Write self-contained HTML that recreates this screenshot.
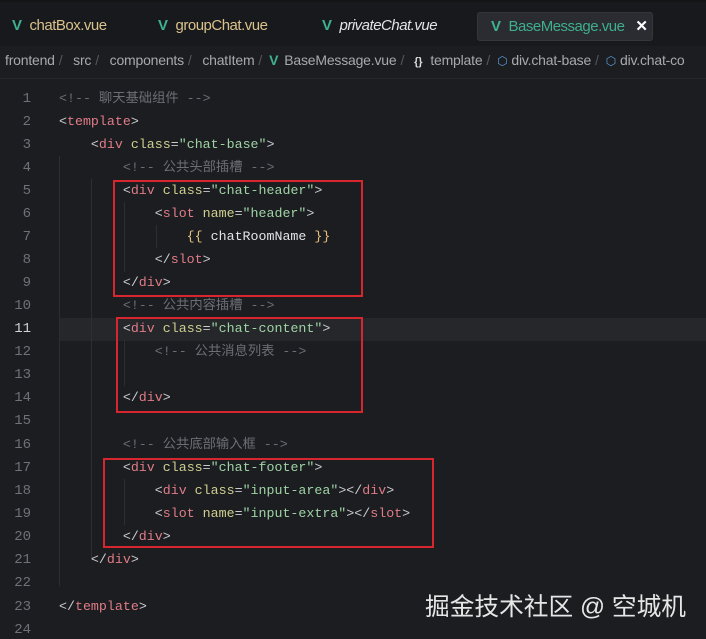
<!DOCTYPE html>
<html><head><meta charset="utf-8"><style>
*{margin:0;padding:0;box-sizing:border-box}
body{width:706px;height:637px;background:#1c1d21;overflow:hidden;position:relative;font-family:"Liberation Sans","Noto Sans CJK SC",sans-serif}
.tabs{position:absolute;left:0;top:0;width:706px;height:46px;background:#18191c;border-top:2px solid #141517}
.tab{position:absolute;top:15px;font-size:15px;letter-spacing:-0.5px;white-space:nowrap}
.v{color:#3fb28d;font-weight:bold;margin-right:8px}
.active{position:absolute;left:477px;top:10px;width:176px;height:29px;background:#2a2c31;border-radius:3px;border:1px solid #34363b}
.bc{position:absolute;left:0;top:46px;width:706px;height:33px;border-bottom:1px solid #26272b;font-size:14px;color:#a7a9ad;white-space:nowrap;padding:6px 0 0 5px;letter-spacing:-0.2px}
.bc .s{color:#55585e;margin:0 7px 0 4px}
.cube{color:#5a9bd5;font-size:12px;margin-right:4px}
.ln{position:absolute;width:31px;text-align:right;font-family:"Liberation Mono",monospace;font-size:14px;line-height:18px;color:#6e7178}
.code{position:absolute;left:59px;font-family:"Liberation Mono","Noto Sans CJK SC",monospace;font-size:13.3px;line-height:18px;height:18px;white-space:pre;color:#c9cbcf}
.t{color:#e07c87}.a{color:#cfcf8e}.s2{color:#9fd3a4}.c{color:#6b6e75}.y{color:#e5c07b}.w{color:#e3e4e6}
.box{position:absolute;border:2px solid #d8262e}
.guide{position:absolute;width:1px;background:#2c2e33}
.wm{position:absolute;left:425px;top:587px;font-size:24.7px;color:#e6e6e6;font-family:"Liberation Sans","Noto Sans CJK SC",sans-serif;white-space:nowrap}
</style></head><body>
<div class="tabs">
<div class="active"></div>
<div class="tab" style="left:12px;color:#d9c28c"><span class="v">V</span>chatBox.vue</div>
<div class="tab" style="left:158px;color:#d9c28c"><span class="v">V</span>groupChat.vue</div>
<div class="tab" style="left:322px;color:#e3e4e6;font-style:italic"><span class="v" style="font-style:normal">V</span>privateChat.vue</div>
<div class="tab" style="left:491px;color:#3fae8a"><span class="v">V</span>BaseMessage.vue<span style="color:#fff;font-weight:bold;margin-left:11px">✕</span></div>
</div>
<div class="bc">frontend<span class="s">/</span> src<span class="s">/</span> components<span class="s">/</span> chatItem<span class="s">/</span><span class="v" style="margin-right:6px">V</span>BaseMessage.vue<span class="s">/</span><span style="color:#ddd;font-size:11px;font-weight:bold;margin:0 8px 0 3px">{}</span>template<span class="s">/</span><span class="cube">⬡</span>div.chat-base<span class="s">/</span><span class="cube">⬡</span>div.chat-co</div>
<div style="position:absolute;left:59px;top:318px;width:647px;height:23px;background:#25272b"></div>
<div class="guide" style="left:59px;top:156px;height:430px"></div>
<div class="guide" style="left:91px;top:179px;height:380px"></div>
<div class="guide" style="left:124px;top:202px;height:70px"></div>
<div class="guide" style="left:156px;top:225px;height:23px"></div>
<div class="guide" style="left:124px;top:340px;height:46px"></div>
<div class="guide" style="left:124px;top:479px;height:46px"></div>
<div class="box" style="left:113px;top:180px;width:250px;height:117px"></div>
<div class="box" style="left:116px;top:317px;width:247px;height:96px"></div>
<div class="box" style="left:103px;top:458px;width:331px;height:90px"></div>
<div class="wm">掘金技术社区 @ 空城机</div>
<div class="ln" style="top:90px">1</div><div class="code" style="top:90px"><span class="c">&lt;!-- 聊天基础组件 --&gt;</span></div>
<div class="ln" style="top:113px">2</div><div class="code" style="top:113px">&lt;<span class="t">template</span>&gt;</div>
<div class="ln" style="top:136px">3</div><div class="code" style="top:136px">    &lt;<span class="t">div</span> <span class="a">class</span>=<span class="s2">"chat-base"</span>&gt;</div>
<div class="ln" style="top:159px">4</div><div class="code" style="top:159px">        <span class="c">&lt;!-- 公共头部插槽 --&gt;</span></div>
<div class="ln" style="top:182px">5</div><div class="code" style="top:182px">        &lt;<span class="t">div</span> <span class="a">class</span>=<span class="s2">"chat-header"</span>&gt;</div>
<div class="ln" style="top:205px">6</div><div class="code" style="top:205px">            &lt;<span class="t">slot</span> <span class="a">name</span>=<span class="s2">"header"</span>&gt;</div>
<div class="ln" style="top:228px">7</div><div class="code" style="top:228px">                <span class="y">{{</span> <span class="w">chatRoomName</span> <span class="y">}}</span></div>
<div class="ln" style="top:251px">8</div><div class="code" style="top:251px">            &lt;/<span class="t">slot</span>&gt;</div>
<div class="ln" style="top:274px">9</div><div class="code" style="top:274px">        &lt;/<span class="t">div</span>&gt;</div>
<div class="ln" style="top:297px">10</div><div class="code" style="top:297px">        <span class="c">&lt;!-- 公共内容插槽 --&gt;</span></div>
<div class="ln" style="top:320px;color:#d0d2d6">11</div><div class="code" style="top:320px">        &lt;<span class="t">div</span> <span class="a">class</span>=<span class="s2">"chat-content"</span>&gt;</div>
<div class="ln" style="top:343px">12</div><div class="code" style="top:343px">            <span class="c">&lt;!-- 公共消息列表 --&gt;</span></div>
<div class="ln" style="top:366px">13</div>
<div class="ln" style="top:389px">14</div><div class="code" style="top:389px">        &lt;/<span class="t">div</span>&gt;</div>
<div class="ln" style="top:412px">15</div>
<div class="ln" style="top:436px">16</div><div class="code" style="top:436px">        <span class="c">&lt;!-- 公共底部输入框 --&gt;</span></div>
<div class="ln" style="top:459px">17</div><div class="code" style="top:459px">        &lt;<span class="t">div</span> <span class="a">class</span>=<span class="s2">"chat-footer"</span>&gt;</div>
<div class="ln" style="top:482px">18</div><div class="code" style="top:482px">            &lt;<span class="t">div</span> <span class="a">class</span>=<span class="s2">"input-area"</span>&gt;&lt;/<span class="t">div</span>&gt;</div>
<div class="ln" style="top:505px">19</div><div class="code" style="top:505px">            &lt;<span class="t">slot</span> <span class="a">name</span>=<span class="s2">"input-extra"</span>&gt;&lt;/<span class="t">slot</span>&gt;</div>
<div class="ln" style="top:528px">20</div><div class="code" style="top:528px">        &lt;/<span class="t">div</span>&gt;</div>
<div class="ln" style="top:551px">21</div><div class="code" style="top:551px">    &lt;/<span class="t">div</span>&gt;</div>
<div class="ln" style="top:574px">22</div>
<div class="ln" style="top:598px">23</div><div class="code" style="top:598px">&lt;/<span class="t">template</span>&gt;</div>
<div class="ln" style="top:621px">24</div>
</body></html>
